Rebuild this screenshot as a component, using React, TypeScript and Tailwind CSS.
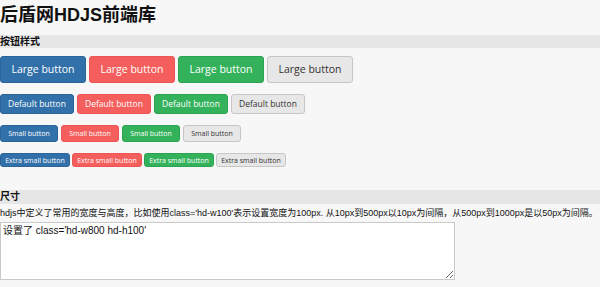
import React from 'react';

const cjk = "font-['Liberation_Sans','Noto_Sans_CJK_SC',sans-serif]";
const btnFont = "font-['Open_Sans','Noto_Sans_CJK_SC',sans-serif]";

const colors = [
  'bg-[#3270a9] border-[#2c6499] text-white',
  'bg-[#f45e5c] border-[#ec5553] text-white',
  'bg-[#33b25b] border-[#2ca352] text-white',
  'bg-[#e7e7e7] border-[#c6c6c6] text-[#333]',
];

const rows = [
  { label: 'Large button', size: 'w-[86px] h-[27px] text-[10.5px]', gap: 'gap-[3px]', mt: 'mt-[8px]' },
  { label: 'Default button', size: 'w-[74px] h-[20px] text-[8.5px]', gap: 'gap-[3px]', mt: 'mt-[11px]' },
  { label: 'Small button', size: 'w-[58px] h-[17px] text-[7px]', gap: 'gap-[3px]', mt: 'mt-[11px]' },
  { label: 'Extra small button', size: 'w-[70px] h-[14px] text-[7px]', gap: 'gap-[2px]', mt: 'mt-[11px]' },
];

const App: React.FC = () => {
  return (
    <div className={`min-h-screen bg-[#f7f7f7] text-[#111] ${cjk}`}>
      <h1 className="pt-[3px] text-[18px] leading-[24px] font-bold text-[#111]">后盾网HDJS前端库</h1>

      {/* 按钮样式 */}
      <div className="mt-[8px] h-[13px] bg-[#e6e6e6] text-[10px] leading-[13px] font-bold">按钮样式</div>

      {rows.map((row, i) => (
        <div key={i} className={`flex ${row.gap} ${row.mt}`}>
          {colors.map((c, j) => (
            <button
              key={j}
              className={`${row.size} ${c} ${btnFont} font-medium border rounded-[3px] flex items-center justify-center leading-none whitespace-nowrap`}
            >
              {row.label}
            </button>
          ))}
        </div>
      ))}

      {/* 尺寸 */}
      <div className="mt-[23px] h-[14px] bg-[#e6e6e6] text-[10px] leading-[14px] font-bold">尺寸</div>
      <p className="mt-[2px] text-[9px] leading-[14px] whitespace-nowrap">
        hdjs中定义了常用的宽度与高度，比如使用class='hd-w100'表示设置宽度为100px. 从10px到500px以10px为间隔，从500px到1000px是以50px为间隔。
      </p>
      <textarea
        readOnly
        defaultValue="设置了 class='hd-w800 hd-h100'"
        className={`mt-[2px] block w-[455px] h-[58px] bg-white border border-[#c9c9c9] px-[2px] py-[1px] text-[10px] leading-[13px] text-[#111] ${cjk} outline-none`}
      />
    </div>
  );
};

export default App;
